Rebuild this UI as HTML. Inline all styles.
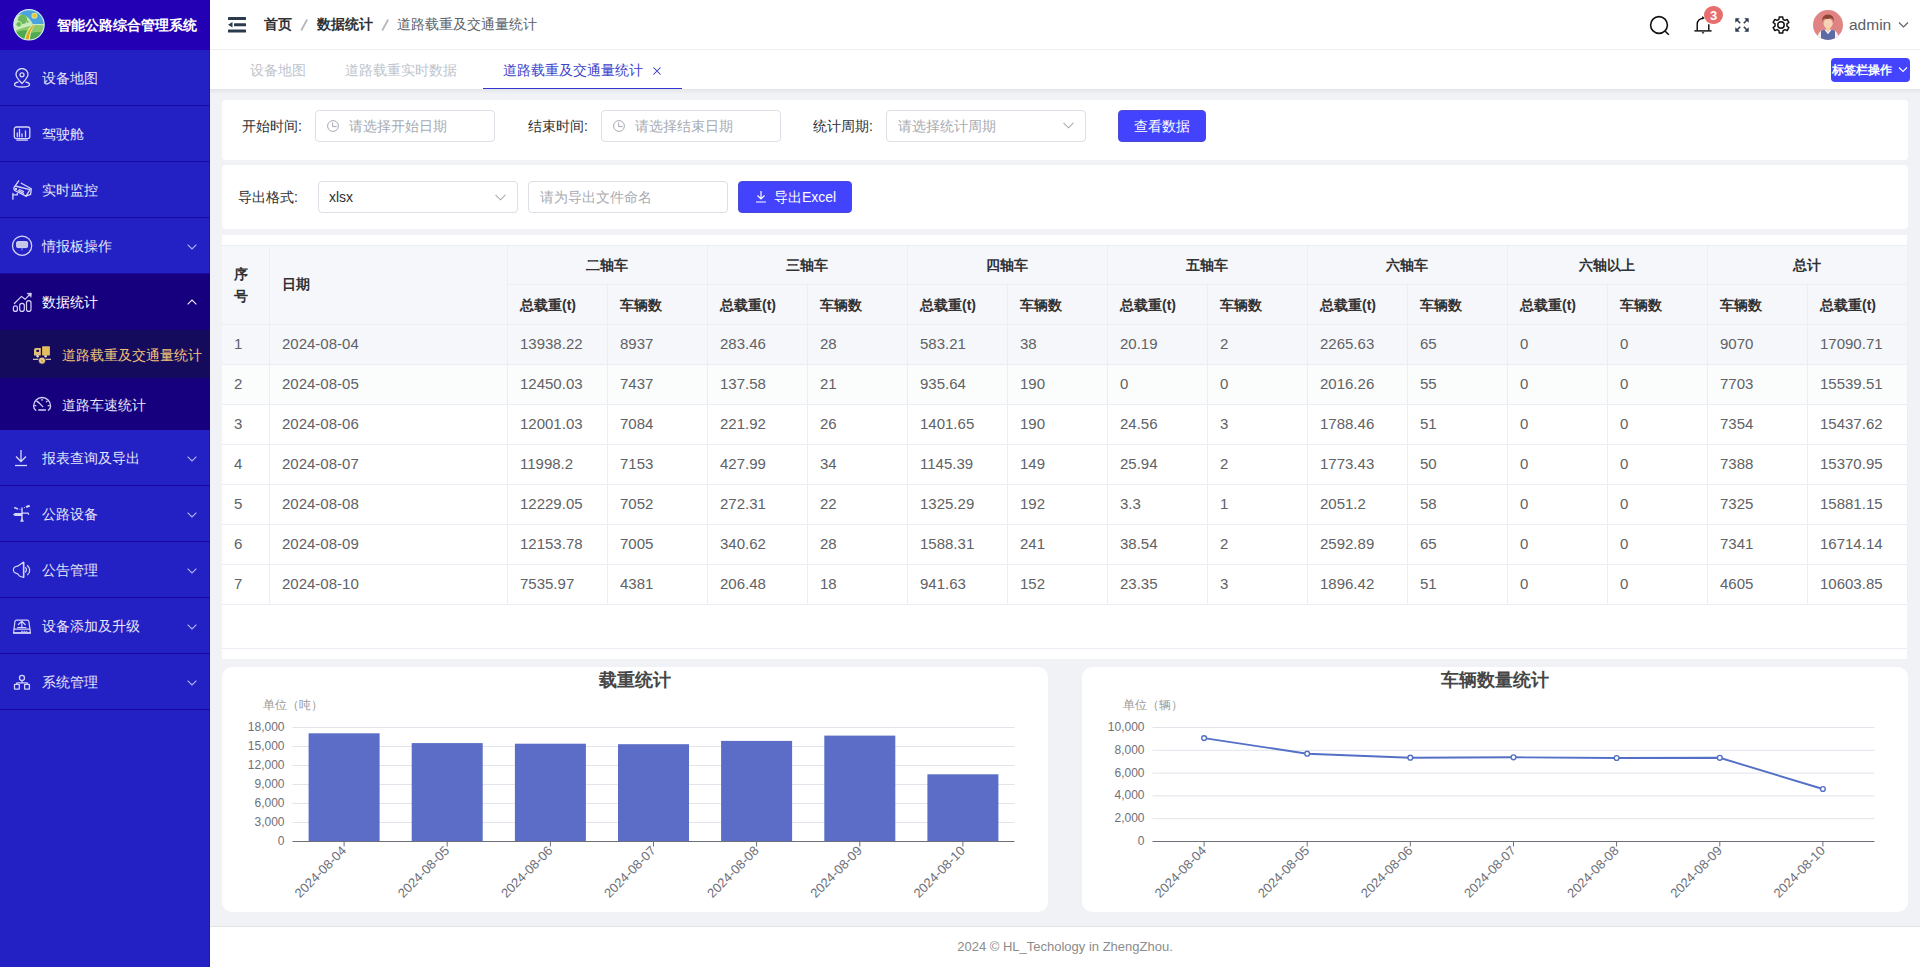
<!DOCTYPE html>
<html><head><meta charset="utf-8">
<style>
*{box-sizing:border-box;margin:0;padding:0}
html,body{width:1920px;height:967px;overflow:hidden;background:#f0f2f5;font-family:"Liberation Sans",sans-serif;font-size:14px;color:#606266}
.abs{position:absolute}
#side{position:absolute;left:0;top:0;width:210px;height:967px;background:#2320c4;box-shadow:inset -1px 0 0 #1c1aa6}
#logo{position:absolute;left:0;top:0;width:210px;height:50px;background:#2400b4}
.mi{position:absolute;left:0;width:210px;height:56px;border-bottom:1px solid #1c08a4;color:#e6e6fa;font-size:14px}
.mi .t{position:absolute;left:42px;top:1px;line-height:55px;white-space:nowrap}
.mi svg{position:absolute}
.ch{position:absolute;left:187px;width:6px;height:6px;border-right:1px solid #c8c8f0;border-bottom:1px solid #c8c8f0;transform:rotate(45deg)}
#nav{position:absolute;left:210px;top:0;width:1710px;height:50px;background:#fff;border-bottom:1px solid #efefef}
#tags{position:absolute;left:210px;top:50px;width:1710px;height:39px;background:#fff}
.card{position:absolute;background:#fff;border-radius:4px}
.lbl{position:absolute;color:#303133;font-size:14px;line-height:32px;white-space:nowrap}
.inp{position:absolute;height:32px;border:1px solid #dcdfe6;border-radius:4px;background:#fff;color:#a8abb2;line-height:30px;white-space:nowrap}
.btn{position:absolute;height:32px;border-radius:4px;background:#4343fe;border:1px solid #4a4ad6;color:#fff;line-height:30px;white-space:nowrap}
.hl{position:absolute;height:1px;background:#ebeef5}
.vl{position:absolute;width:1px;background:#ebeef5}
.th{position:absolute;color:#303133;font-weight:bold;font-size:14px;line-height:20px;white-space:nowrap}
.td{position:absolute;color:#606266;font-size:15px;line-height:20px;white-space:nowrap}

</style></head><body>
<div id="side">
 <div id="logo">
  <svg class="abs" style="left:13px;top:9px" width="32" height="32" viewBox="0 0 32 32">
   <defs><clipPath id="lc"><circle cx="16" cy="15.8" r="15.2"/></clipPath></defs>
   <g clip-path="url(#lc)">
    <rect x="0" y="0" width="32" height="32" fill="#4aa3dc"/>
    <circle cx="21.4" cy="6.8" r="3" fill="#d8ecb0"/><circle cx="21.4" cy="6.8" r="2.2" fill="#ecc42c"/>
    <path d="M0 8 Q6 4 12 6.5 Q17 9 20 15.5 L0 22Z" fill="#c8eab8"/>
    <circle cx="9.6" cy="10.4" r="4.6" fill="#6cb85c"/>
    <circle cx="5.8" cy="15.3" r="3" fill="#d0f0c0"/><circle cx="5.8" cy="15.3" r="2.4" fill="#6cb85c"/>
    <circle cx="14.8" cy="12.8" r="1" fill="#6cb85c"/>
    <path d="M0 21 Q10 16.5 20 15.2 Q27 14.6 32 15.3 L32 32 L0 32Z" fill="#d4f0c0"/>
    <path d="M0 22.2 Q10 17.8 20 16.3 Q27 15.8 32 16.4 L32 32 L0 32Z" fill="#8cc86c"/>
    <path d="M0 25 Q8 20 16 21.5 L14 32 L0 32Z" fill="#4ea84e"/>
    <path d="M18 24 Q26 22 32 24 L32 32 L17 32Z" fill="#52aa50"/>
    <path d="M10.8 32 Q12.6 22 19.3 15.6 L22.2 15.5 Q17 22.5 16.6 32Z" fill="#d8f0b8"/>
    <path d="M12 32 Q13.6 22.5 20 15.9 L21.3 15.9 Q16 22.5 15.6 32Z" fill="#e4a81e"/>
   </g>
   <circle cx="16" cy="15.8" r="15.2" fill="none" stroke="#d4ecf4" stroke-width="1.1"/>
  </svg>
  <div class="abs" style="left:57px;top:0;line-height:50px;color:#fff;font-weight:bold;font-size:14px;white-space:nowrap">智能公路综合管理系统</div>
 </div>
 <!-- 设备地图 50-105 -->
 <div class="mi" style="top:50px">
  <svg style="left:13px;top:18px" width="18" height="20" viewBox="0 0 18 20" fill="none" stroke="#d8d8f8" stroke-width="1.3">
   <path d="M9 15.5 C5 11.5 3 9 3 6.5 A6 6 0 0 1 15 6.5 C15 9 13 11.5 9 15.5Z"/><circle cx="9" cy="6.8" r="2"/>
   <path d="M5.5 14 C2.5 14.5 1.5 15.5 1.5 16.5 C1.5 18 5 19 9 19 C13 19 16.5 18 16.5 16.5 C16.5 15.5 15.5 14.5 12.5 14"/>
  </svg>
  <div class="t">设备地图</div>
 </div>
 <div class="mi" style="top:106px">
  <svg style="left:13px;top:19px" width="18" height="17" viewBox="0 0 18 17" fill="none" stroke="#d8d8f8" stroke-width="1.3" stroke-linecap="round">
   <rect x="1.3" y="2" width="15.5" height="11.6" rx="2"/><path d="M4 15.2 H14.3"/><path d="M4.3 11.8 V8 M6.5 11.8 V4.5 M9 11.8 V9 M12.5 11.8 V6"/>
  </svg>
  <div class="t">驾驶舱</div>
 </div>
 <div class="mi" style="top:162px">
  <svg style="left:8px;top:14px" width="28" height="28" viewBox="0 0 28 28" fill="none" stroke="#d8d8f8" stroke-width="1.3" stroke-linejoin="round" stroke-linecap="round">
   <path d="M10.7 4.9 L7.2 9.8"/><path d="M7.2 10 L22 13.7 L18 20.2 L6.6 14.5 Q5.4 13.5 6 11.5 Q6.5 10.2 7.2 10Z"/>
   <path d="M13.3 7.2 L23.3 12.8 L22.6 18.4 L18 20.2"/><circle cx="7.9" cy="12.9" r="0.6" fill="#d8d8f8"/>
   <path d="M10.2 14.6 L15.6 17.3 M11.5 13.5 L15.5 15.5"/>
   <path d="M4.9 17.4 V23.2 M4.9 18.9 H9.3 V17.4"/>
  </svg>
  <div class="t">实时监控</div>
 </div>
 <div class="mi" style="top:218px">
  <svg style="left:8px;top:13px" width="28" height="28" viewBox="0 0 28 28" fill="none" stroke="#d4d4fa" stroke-width="1.3">
   <circle cx="14.1" cy="14.7" r="9.6"/><rect x="8.6" y="10.6" width="11" height="6" rx="1.2" fill="#c4c8e4" stroke="#dcdcfa" stroke-width="0.9"/><path d="M14 17 V19.4" stroke-width="1.1" stroke="#8a8af0"/>
  </svg>
  <div class="t">情报板操作</div>
  <svg class="abs" style="left:187px;top:26px" width="10" height="6" viewBox="0 0 10 6" fill="none" stroke="#b4b4f4" stroke-width="1.1"><path d="M0.6 0.6 L5 5 L9.4 0.6"/></svg>
 </div>
 <div class="mi" style="top:274px;background:#17007e;border-bottom:none;height:56px;color:#fff">
  <svg style="left:8px;top:13px" width="28" height="28" viewBox="0 0 28 28" fill="none" stroke="#d4d4fa" stroke-width="1.2" stroke-linecap="round" stroke-linejoin="round">
   <path d="M6.4 16.5 L13.5 9.4 L17 12.3 L21.6 7.6"/><path d="M19.3 6.3 L23.4 6.1 L23.1 10Z" fill="#d4d4fa" stroke-width="0.6"/>
   <rect x="5.4" y="18.8" width="4" height="5.6" rx="2"/><rect x="11.7" y="16.4" width="4.6" height="8" rx="2.2"/><rect x="18.5" y="13.6" width="4.5" height="10.8" rx="2.2"/>
  </svg>
  <div class="t">数据统计</div>
  <svg class="abs" style="left:187px;top:25px" width="10" height="6" viewBox="0 0 10 6" fill="none" stroke="#f0f0ff" stroke-width="1.1"><path d="M0.6 5.4 L5 1 L9.4 5.4"/></svg>
 </div>
 <div class="abs" style="left:0;top:330px;width:210px;height:48px;background:#150b5c"></div>
 <div class="abs" style="left:0;top:378px;width:210px;height:52px;background:#17007e"></div>
 <svg class="abs" style="left:28px;top:340px" width="28" height="28" viewBox="0 0 28 28">
   <path d="M6 15.6 V10 Q6 8 8 8 H12.8 V15.6Z" fill="#e2c07a"/><rect x="8.4" y="9.9" width="2.6" height="2" fill="#17004e"/>
   <rect x="14.1" y="6.2" width="7.8" height="9.4" rx="0.6" fill="#e4be5c"/>
   <circle cx="9.6" cy="16.3" r="1.2" fill="#e8dcd0"/><circle cx="17.6" cy="16.3" r="1.2" fill="#e8dcd0"/>
   <path d="M5 19.3 H23" stroke="#ecdcc0" stroke-width="1.1"/>
   <circle cx="14" cy="20.6" r="3.6" fill="#e6c888" stroke="#150a5a" stroke-width="0.8"/><path d="M13 21.5 L14 19.6 L15 21.5Z" fill="#a88a30"/>
  </svg>
 <div class="abs" style="left:62px;top:331px;line-height:48px;color:#f3c07a;white-space:nowrap">道路载重及交通量统计</div>
 <svg class="abs" style="left:28px;top:390px" width="28" height="28" viewBox="0 0 28 28" fill="none" stroke="#d4d4fa" stroke-width="1.3" stroke-linecap="round">
   <path d="M7.8 20.3 Q5.6 19 5.6 16 A8.5 8.5 0 0 1 22.6 16 Q22.6 19 20.3 20.3"/>
   <path d="M14 9.5 V10.3 M8.9 11.2 L9.6 11.9 M19.1 11.2 L18.4 11.9 M6.8 15.7 H7.8 M21.2 15.7 H20.2"/>
   <path d="M9.6 11.5 L14.8 16.6"/><path d="M10.8 20 H17.4" stroke-width="1.5"/>
  </svg>
 <div class="abs" style="left:62px;top:380px;line-height:51px;color:#e6e6fa;white-space:nowrap">道路车速统计</div>
 <div class="mi" style="top:430px">
  <svg style="left:13px;top:19px" width="16" height="18" viewBox="0 0 16 18" fill="none" stroke="#d8d8f8" stroke-width="1.3">
   <path d="M8 1 V12 M3 7.5 L8 12.5 L13 7.5"/><path d="M2 16.5 H14"/>
  </svg>
  <div class="t">报表查询及导出</div>
  <svg class="abs" style="left:187px;top:26px" width="10" height="6" viewBox="0 0 10 6" fill="none" stroke="#b4b4f4" stroke-width="1.1"><path d="M0.6 0.6 L5 5 L9.4 0.6"/></svg>
 </div>
 <div class="mi" style="top:486px">
  <svg style="left:8px;top:14px" width="28" height="28" viewBox="0 0 28 28" fill="none" stroke="#d4d4fa" stroke-width="1.3">
   <path d="M14 7.5 V19" stroke-width="1.4"/><path d="M12.2 21.8 L13.3 18.4 H14.7 L15.8 21.8Z" fill="#d4d4fa" stroke="none"/>
   <path d="M5 14.5 L6.9 13 H14 V16 H6.9Z" fill="#d4d4fa" stroke="none"/><path d="M14 13.1 H20.1 L20.8 14.8" stroke-width="1.2"/>
   <path d="M6.2 7.6 L10 9.1" stroke-width="1.6"/><path d="M11.6 9.5 L12.3 9.3 M16 7.7 L16.7 7.4" stroke-width="1.2"/><path d="M18.1 7 L21.7 5.7" stroke-width="2"/>
  </svg>
  <div class="t">公路设备</div>
  <svg class="abs" style="left:187px;top:26px" width="10" height="6" viewBox="0 0 10 6" fill="none" stroke="#b4b4f4" stroke-width="1.1"><path d="M0.6 0.6 L5 5 L9.4 0.6"/></svg>
 </div>
 <div class="mi" style="top:542px">
  <svg style="left:8px;top:13px" width="28" height="28" viewBox="0 0 28 28" fill="none" stroke="#d4d4fa" stroke-width="1.2" stroke-linejoin="round">
   <path d="M15.6 7.1 L9.6 11.2 Q6.8 11.6 5.8 13 Q4.9 15 5.9 16.8 Q7 18.2 9.8 18.8 L11.4 21 L15.6 22.5Z"/><path d="M15.6 7.1 V22.5" stroke-width="1.5"/>
   <path d="M17.2 12.3 Q19.8 14.8 17.2 17.5"/><path d="M19.2 10.2 Q24.2 14.9 19.3 20.2"/>
  </svg>
  <div class="t">公告管理</div>
  <svg class="abs" style="left:187px;top:26px" width="10" height="6" viewBox="0 0 10 6" fill="none" stroke="#b4b4f4" stroke-width="1.1"><path d="M0.6 0.6 L5 5 L9.4 0.6"/></svg>
 </div>
 <div class="mi" style="top:598px">
  <svg style="left:8px;top:13px" width="28" height="28" viewBox="0 0 28 28" fill="none" stroke="#d4d4fa" stroke-width="1.2" stroke-linejoin="round" stroke-linecap="round">
   <path d="M5.6 21.8 L6.9 10.5 Q7.2 9.2 8.5 9.2 H19.3 Q20.6 9.2 20.9 10.5 L22.4 21.8Z"/><path d="M6.1 18.2 H21.8"/><path d="M5.6 22 H22.4" stroke-width="1.5"/>
   <path d="M13.8 10.6 V16.3 M10.4 13.5 L13.8 10.3 L17.3 13.7"/><path d="M9.7 16.5 H17.8"/><path d="M13.5 20.3 H19" stroke-dasharray="1.2 1.2" stroke-width="0.9"/>
  </svg>
  <div class="t">设备添加及升级</div>
  <svg class="abs" style="left:187px;top:26px" width="10" height="6" viewBox="0 0 10 6" fill="none" stroke="#b4b4f4" stroke-width="1.1"><path d="M0.6 0.6 L5 5 L9.4 0.6"/></svg>
 </div>
 <div class="mi" style="top:654px">
  <svg style="left:8px;top:13px" width="28" height="28" viewBox="0 0 28 28" fill="none" stroke="#d4d4fa" stroke-width="1.3">
   <circle cx="14" cy="10.9" r="2.5"/><path d="M14 13.4 V15.8 M8.6 17.2 V16.4 Q8.6 15.8 9.3 15.8 H18.7 Q19.4 15.8 19.4 16.4 V17.2"/>
   <rect x="6.5" y="17.4" width="4.8" height="4.8" rx="0.4"/><rect x="16.6" y="17.4" width="4.8" height="4.8" rx="0.4"/>
  </svg>
  <div class="t">系统管理</div>
  <svg class="abs" style="left:187px;top:26px" width="10" height="6" viewBox="0 0 10 6" fill="none" stroke="#b4b4f4" stroke-width="1.1"><path d="M0.6 0.6 L5 5 L9.4 0.6"/></svg>
 </div>
</div>

<div id="nav">
 <svg class="abs" style="left:18px;top:17px" width="18" height="16" viewBox="0 0 18 16" fill="#2c3a4e">
  <rect x="0" y="0" width="18" height="3" rx="0.5"/><rect x="6" y="6.3" width="12" height="3" rx="0.5"/><rect x="0" y="12.5" width="18" height="3" rx="0.5"/><path d="M0 7.8 L4.5 5 V10.6Z"/>
 </svg>
 <div class="abs" style="left:54px;top:14px;line-height:20px;color:#303133;font-weight:bold;white-space:nowrap">首页</div>
 <svg class="abs" style="left:88px;top:17px" width="12" height="16" viewBox="0 0 12 16"><path d="M9.2 2.5 L3.2 13.5" stroke="#b2b5bc" stroke-width="1.7" stroke-linecap="butt"/></svg>
 <div class="abs" style="left:107px;top:14px;line-height:20px;color:#303133;font-weight:bold;white-space:nowrap">数据统计</div>
 <svg class="abs" style="left:169px;top:17px" width="12" height="16" viewBox="0 0 12 16"><path d="M9.2 2.5 L3.2 13.5" stroke="#b2b5bc" stroke-width="1.7" stroke-linecap="butt"/></svg>
 <div class="abs" style="left:187px;top:14px;line-height:20px;color:#606266;white-space:nowrap">道路载重及交通量统计</div>
 <!-- search -->
 <svg class="abs" style="left:1438px;top:14px" width="24" height="24" viewBox="0 0 24 24" fill="none" stroke="#111" stroke-width="1.6">
  <circle cx="11" cy="11" r="8.4"/><path d="M17 17 L20.8 20.8"/>
 </svg>
 <!-- bell -->
 <svg class="abs" style="left:1482px;top:14px" width="22" height="22" viewBox="0 0 22 22" fill="none" stroke="#000" stroke-width="1.35">
  <path d="M5.2 16.6 V10.2 A5.8 5.8 0 0 1 11 4.3 M16.8 10.2 V16.6"/><path d="M2.4 16.9 H19.6"/><path d="M10.6 2.4 L12.2 4.3 L10.4 4.9Z" fill="#000" stroke-width="0.6"/><path d="M9.4 17.8 H12.6 L11 20.3Z" fill="#444" stroke="none"/>
 </svg>
 <div class="abs" style="left:1494px;top:6px;width:19px;height:18px;border-radius:9px;background:#e86d6d;color:#fff;font-size:13px;font-weight:bold;line-height:19px;text-align:center">3</div>
 <!-- fullscreen -->
 <svg class="abs" style="left:1525px;top:18px" width="14" height="14" viewBox="0 0 14 14" fill="#2c3a4e" stroke="#2c3a4e" stroke-width="1.5">
  <path d="M0.3 0.3 H4.8 L0.3 4.8Z" stroke="none"/><path d="M1.8 1.8 L5.2 5.2"/>
  <path d="M13.7 0.3 H9.2 L13.7 4.8Z" stroke="none"/><path d="M12.2 1.8 L8.8 5.2"/>
  <path d="M0.3 13.7 V9.2 L4.8 13.7Z" stroke="none"/><path d="M1.8 12.2 L5.2 8.8"/>
  <path d="M13.7 13.7 V9.2 L9.2 13.7Z" stroke="none"/><path d="M12.2 12.2 L8.8 8.8"/>
 </svg>
 <!-- gear -->
 <svg class="abs" style="left:1560px;top:14px" width="22" height="22" viewBox="0 0 24 24" fill="none" stroke="#111" stroke-width="1.6" stroke-linejoin="round">
  <path d="M10.13 3.20 L13.87 3.20 L14.26 5.80 L16.24 6.94 L18.69 5.98 L20.56 9.22 L18.50 10.85 L18.50 13.15 L20.56 14.78 L18.69 18.02 L16.24 17.06 L14.26 18.20 L13.87 20.80 L10.13 20.80 L9.74 18.20 L7.76 17.06 L5.31 18.02 L3.44 14.78 L5.50 13.15 L5.50 10.85 L3.44 9.22 L5.31 5.98 L7.76 6.94 L9.74 5.80Z"/>
  <circle cx="12" cy="12" r="3.5"/>
 </svg>
 <!-- avatar -->
 <svg class="abs" style="left:1603px;top:10px" width="30" height="30" viewBox="0 0 30 30">
  <defs><clipPath id="av"><circle cx="15" cy="15" r="15"/></clipPath></defs>
  <g clip-path="url(#av)">
   <rect width="30" height="30" fill="#e08383"/>
   <path d="M3.5 31 Q4.5 21.5 10 19.8 L20 19.8 Q25.5 21.5 26.5 31Z" fill="#f4f0f6"/>
   <path d="M8 31 V20.8 L11.2 19.6 L15 24.2 L18.8 19.6 L22 20.8 V31Z" fill="#5d6aa4"/>
   <path d="M12.8 16.5 H17.2 V19.8 L15 22.5 L12.8 19.8Z" fill="#f2cdb0"/>
   <ellipse cx="15.1" cy="13.6" rx="4.6" ry="4.8" fill="#f5d3b6"/>
   <path d="M9.3 11.6 Q8.8 4.4 15 4.4 Q21.2 4.4 20.8 11.6 Q20.3 8.6 17.8 8 Q15 9.5 11.5 8.6 Q9.8 9.4 9.3 11.6Z" fill="#8a4630"/>
  </g>
 </svg>
 <div class="abs" style="left:1639px;top:15px;line-height:20px;color:#5a5e66;font-size:15.5px;white-space:nowrap">admin</div>
 <svg class="abs" style="left:1688px;top:21px" width="11" height="8" viewBox="0 0 11 8" fill="none" stroke="#606266" stroke-width="1.2"><path d="M1 1.5 L5.5 6 L10 1.5"/></svg>
</div>
<div id="tags">
 <div class="abs" style="left:40px;top:10px;line-height:20px;color:#c0c4cc;white-space:nowrap">设备地图</div>
 <div class="abs" style="left:135px;top:10px;line-height:20px;color:#c0c4cc;white-space:nowrap">道路载重实时数据</div>
 <div class="abs" style="left:293px;top:10px;line-height:20px;color:#4242cc;white-space:nowrap">道路载重及交通量统计</div>
 <svg class="abs" style="left:442px;top:16px" width="10" height="10" viewBox="0 0 10 10" fill="none" stroke="#3434c4" stroke-width="1.05"><path d="M1.5 1.5 L8.5 8.5 M8.5 1.5 L1.5 8.5"/></svg>
 <div class="abs" style="left:273px;top:38px;width:199px;height:2px;background:#3434d0"></div>
 <div class="abs" style="left:1621px;top:8px;width:79px;height:24px;border-radius:4px;background:#4444fe"></div>
 <div class="abs" style="left:1622px;top:8px;line-height:24px;color:#fff;font-size:12px;font-weight:bold;white-space:nowrap">标签栏操作</div>
 <svg class="abs" style="left:1688px;top:16px" width="10" height="8" viewBox="0 0 10 8" fill="none" stroke="#fff" stroke-width="1.1"><path d="M1 1.5 L5 5.5 L9 1.5"/></svg>
</div>
<div class="abs" style="left:210px;top:89px;width:1710px;height:5px;background:linear-gradient(#e2e4e8,#f0f2f5)"></div>

<div class="card" style="left:222px;top:100px;width:1686px;height:60px"></div>
<div class="lbl" style="left:242px;top:110px">开始时间:</div>
<div class="inp" style="left:315px;top:110px;width:180px;padding-left:33px">请选择开始日期</div>
<svg class="abs" style="left:327px;top:120px" width="12" height="12" viewBox="0 0 12 12" fill="none" stroke="#a8abb2" stroke-width="1"><circle cx="6" cy="6" r="5.4"/><path d="M5.6 2.5 V6.6 H9.7"/></svg>
<div class="lbl" style="left:528px;top:110px">结束时间:</div>
<div class="inp" style="left:601px;top:110px;width:180px;padding-left:33px">请选择结束日期</div>
<svg class="abs" style="left:613px;top:120px" width="12" height="12" viewBox="0 0 12 12" fill="none" stroke="#a8abb2" stroke-width="1"><circle cx="6" cy="6" r="5.4"/><path d="M5.6 2.5 V6.6 H9.7"/></svg>
<div class="lbl" style="left:813px;top:110px">统计周期:</div>
<div class="inp" style="left:886px;top:110px;width:200px;padding-left:11px">请选择统计周期</div>
<svg class="abs" style="left:1062.5px;top:122.3px" width="11" height="7" viewBox="0 0 11 7" fill="none" stroke="#a8abb2" stroke-width="1.1"><path d="M0.5 0.8 L5.5 5.8 L10.5 0.8"/></svg>
<div class="btn" style="left:1118px;top:110px;width:88px;text-align:center">查看数据</div>

<div class="card" style="left:222px;top:165px;width:1686px;height:64px"></div>
<div class="lbl" style="left:238px;top:181px">导出格式:</div>
<div class="inp" style="left:318px;top:181px;width:200px;padding-left:10px;color:#303133;font-size:14px">xlsx</div>
<svg class="abs" style="left:494.5px;top:193.7px" width="11" height="7" viewBox="0 0 11 7" fill="none" stroke="#a8abb2" stroke-width="1.1"><path d="M0.5 0.8 L5.5 5.8 L10.5 0.8"/></svg>
<div class="inp" style="left:528px;top:181px;width:200px;padding-left:11px">请为导出文件命名</div>
<div class="btn" style="left:738px;top:181px;width:114px"></div>
<svg class="abs" style="left:755px;top:190px" width="12" height="13" viewBox="0 0 12 13" fill="none" stroke="#fff" stroke-width="1.2"><path d="M6 1 V9 M2.5 5.5 L6 9 L9.5 5.5 M1 12 H11"/></svg>
<div class="abs" style="left:774px;top:181px;line-height:32px;color:#fff;white-space:nowrap">导出Excel</div>

<div class="abs" style="left:222px;top:235px;width:1685px;height:424px;background:#fff"></div>
<div class="abs" style="left:222px;top:245px;width:1685px;height:79px;background:#f5f7fa"></div>
<div class="abs" style="left:222px;top:324px;width:1685px;height:40px;background:#f5f7fa"></div>
<div class="abs" style="left:222px;top:364px;width:1685px;height:40px;background:#fbfdfc"></div>
<div class="hl" style="left:222px;top:245px;width:1685px"></div>
<div class="hl" style="left:507px;top:284px;width:1400px"></div>
<div class="hl" style="left:222px;top:324px;width:1685px"></div>
<div class="hl" style="left:222px;top:364px;width:1685px"></div>
<div class="hl" style="left:222px;top:404px;width:1685px"></div>
<div class="hl" style="left:222px;top:444px;width:1685px"></div>
<div class="hl" style="left:222px;top:484px;width:1685px"></div>
<div class="hl" style="left:222px;top:524px;width:1685px"></div>
<div class="hl" style="left:222px;top:564px;width:1685px"></div>
<div class="hl" style="left:222px;top:604px;width:1685px"></div>
<div class="hl" style="left:222px;top:648px;width:1685px"></div>
<div class="vl" style="left:269px;top:245px;height:359px"></div>
<div class="vl" style="left:507px;top:245px;height:359px"></div>
<div class="vl" style="left:607px;top:285px;height:319px"></div>
<div class="vl" style="left:707px;top:245px;height:359px"></div>
<div class="vl" style="left:807px;top:285px;height:319px"></div>
<div class="vl" style="left:907px;top:245px;height:359px"></div>
<div class="vl" style="left:1007px;top:285px;height:319px"></div>
<div class="vl" style="left:1107px;top:245px;height:359px"></div>
<div class="vl" style="left:1207px;top:285px;height:319px"></div>
<div class="vl" style="left:1307px;top:245px;height:359px"></div>
<div class="vl" style="left:1407px;top:285px;height:319px"></div>
<div class="vl" style="left:1507px;top:245px;height:359px"></div>
<div class="vl" style="left:1607px;top:285px;height:319px"></div>
<div class="vl" style="left:1707px;top:245px;height:359px"></div>
<div class="vl" style="left:1807px;top:285px;height:319px"></div>
<div class="vl" style="left:1907px;top:245px;height:359px"></div>
<div class="th" style="left:234px;top:263px;width:20px;line-height:22px;white-space:normal">序<br>号</div>
<div class="th" style="left:282px;top:274px">日期</div>
<div class="th" style="left:507px;top:255px;width:200px;text-align:center">二轴车</div>
<div class="th" style="left:707px;top:255px;width:200px;text-align:center">三轴车</div>
<div class="th" style="left:907px;top:255px;width:200px;text-align:center">四轴车</div>
<div class="th" style="left:1107px;top:255px;width:200px;text-align:center">五轴车</div>
<div class="th" style="left:1307px;top:255px;width:200px;text-align:center">六轴车</div>
<div class="th" style="left:1507px;top:255px;width:200px;text-align:center">六轴以上</div>
<div class="th" style="left:1707px;top:255px;width:200px;text-align:center">总计</div>
<div class="th" style="left:520px;top:295px">总载重(t)</div>
<div class="th" style="left:620px;top:295px">车辆数</div>
<div class="th" style="left:720px;top:295px">总载重(t)</div>
<div class="th" style="left:820px;top:295px">车辆数</div>
<div class="th" style="left:920px;top:295px">总载重(t)</div>
<div class="th" style="left:1020px;top:295px">车辆数</div>
<div class="th" style="left:1120px;top:295px">总载重(t)</div>
<div class="th" style="left:1220px;top:295px">车辆数</div>
<div class="th" style="left:1320px;top:295px">总载重(t)</div>
<div class="th" style="left:1420px;top:295px">车辆数</div>
<div class="th" style="left:1520px;top:295px">总载重(t)</div>
<div class="th" style="left:1620px;top:295px">车辆数</div>
<div class="th" style="left:1720px;top:295px">车辆数</div>
<div class="th" style="left:1820px;top:295px">总载重(t)</div>
<div class="td" style="left:234px;top:334px">1</div>
<div class="td" style="left:282px;top:334px">2024-08-04</div>
<div class="td" style="left:520px;top:334px">13938.22</div>
<div class="td" style="left:620px;top:334px">8937</div>
<div class="td" style="left:720px;top:334px">283.46</div>
<div class="td" style="left:820px;top:334px">28</div>
<div class="td" style="left:920px;top:334px">583.21</div>
<div class="td" style="left:1020px;top:334px">38</div>
<div class="td" style="left:1120px;top:334px">20.19</div>
<div class="td" style="left:1220px;top:334px">2</div>
<div class="td" style="left:1320px;top:334px">2265.63</div>
<div class="td" style="left:1420px;top:334px">65</div>
<div class="td" style="left:1520px;top:334px">0</div>
<div class="td" style="left:1620px;top:334px">0</div>
<div class="td" style="left:1720px;top:334px">9070</div>
<div class="td" style="left:1820px;top:334px">17090.71</div>
<div class="td" style="left:234px;top:374px">2</div>
<div class="td" style="left:282px;top:374px">2024-08-05</div>
<div class="td" style="left:520px;top:374px">12450.03</div>
<div class="td" style="left:620px;top:374px">7437</div>
<div class="td" style="left:720px;top:374px">137.58</div>
<div class="td" style="left:820px;top:374px">21</div>
<div class="td" style="left:920px;top:374px">935.64</div>
<div class="td" style="left:1020px;top:374px">190</div>
<div class="td" style="left:1120px;top:374px">0</div>
<div class="td" style="left:1220px;top:374px">0</div>
<div class="td" style="left:1320px;top:374px">2016.26</div>
<div class="td" style="left:1420px;top:374px">55</div>
<div class="td" style="left:1520px;top:374px">0</div>
<div class="td" style="left:1620px;top:374px">0</div>
<div class="td" style="left:1720px;top:374px">7703</div>
<div class="td" style="left:1820px;top:374px">15539.51</div>
<div class="td" style="left:234px;top:414px">3</div>
<div class="td" style="left:282px;top:414px">2024-08-06</div>
<div class="td" style="left:520px;top:414px">12001.03</div>
<div class="td" style="left:620px;top:414px">7084</div>
<div class="td" style="left:720px;top:414px">221.92</div>
<div class="td" style="left:820px;top:414px">26</div>
<div class="td" style="left:920px;top:414px">1401.65</div>
<div class="td" style="left:1020px;top:414px">190</div>
<div class="td" style="left:1120px;top:414px">24.56</div>
<div class="td" style="left:1220px;top:414px">3</div>
<div class="td" style="left:1320px;top:414px">1788.46</div>
<div class="td" style="left:1420px;top:414px">51</div>
<div class="td" style="left:1520px;top:414px">0</div>
<div class="td" style="left:1620px;top:414px">0</div>
<div class="td" style="left:1720px;top:414px">7354</div>
<div class="td" style="left:1820px;top:414px">15437.62</div>
<div class="td" style="left:234px;top:454px">4</div>
<div class="td" style="left:282px;top:454px">2024-08-07</div>
<div class="td" style="left:520px;top:454px">11998.2</div>
<div class="td" style="left:620px;top:454px">7153</div>
<div class="td" style="left:720px;top:454px">427.99</div>
<div class="td" style="left:820px;top:454px">34</div>
<div class="td" style="left:920px;top:454px">1145.39</div>
<div class="td" style="left:1020px;top:454px">149</div>
<div class="td" style="left:1120px;top:454px">25.94</div>
<div class="td" style="left:1220px;top:454px">2</div>
<div class="td" style="left:1320px;top:454px">1773.43</div>
<div class="td" style="left:1420px;top:454px">50</div>
<div class="td" style="left:1520px;top:454px">0</div>
<div class="td" style="left:1620px;top:454px">0</div>
<div class="td" style="left:1720px;top:454px">7388</div>
<div class="td" style="left:1820px;top:454px">15370.95</div>
<div class="td" style="left:234px;top:494px">5</div>
<div class="td" style="left:282px;top:494px">2024-08-08</div>
<div class="td" style="left:520px;top:494px">12229.05</div>
<div class="td" style="left:620px;top:494px">7052</div>
<div class="td" style="left:720px;top:494px">272.31</div>
<div class="td" style="left:820px;top:494px">22</div>
<div class="td" style="left:920px;top:494px">1325.29</div>
<div class="td" style="left:1020px;top:494px">192</div>
<div class="td" style="left:1120px;top:494px">3.3</div>
<div class="td" style="left:1220px;top:494px">1</div>
<div class="td" style="left:1320px;top:494px">2051.2</div>
<div class="td" style="left:1420px;top:494px">58</div>
<div class="td" style="left:1520px;top:494px">0</div>
<div class="td" style="left:1620px;top:494px">0</div>
<div class="td" style="left:1720px;top:494px">7325</div>
<div class="td" style="left:1820px;top:494px">15881.15</div>
<div class="td" style="left:234px;top:534px">6</div>
<div class="td" style="left:282px;top:534px">2024-08-09</div>
<div class="td" style="left:520px;top:534px">12153.78</div>
<div class="td" style="left:620px;top:534px">7005</div>
<div class="td" style="left:720px;top:534px">340.62</div>
<div class="td" style="left:820px;top:534px">28</div>
<div class="td" style="left:920px;top:534px">1588.31</div>
<div class="td" style="left:1020px;top:534px">241</div>
<div class="td" style="left:1120px;top:534px">38.54</div>
<div class="td" style="left:1220px;top:534px">2</div>
<div class="td" style="left:1320px;top:534px">2592.89</div>
<div class="td" style="left:1420px;top:534px">65</div>
<div class="td" style="left:1520px;top:534px">0</div>
<div class="td" style="left:1620px;top:534px">0</div>
<div class="td" style="left:1720px;top:534px">7341</div>
<div class="td" style="left:1820px;top:534px">16714.14</div>
<div class="td" style="left:234px;top:574px">7</div>
<div class="td" style="left:282px;top:574px">2024-08-10</div>
<div class="td" style="left:520px;top:574px">7535.97</div>
<div class="td" style="left:620px;top:574px">4381</div>
<div class="td" style="left:720px;top:574px">206.48</div>
<div class="td" style="left:820px;top:574px">18</div>
<div class="td" style="left:920px;top:574px">941.63</div>
<div class="td" style="left:1020px;top:574px">152</div>
<div class="td" style="left:1120px;top:574px">23.35</div>
<div class="td" style="left:1220px;top:574px">3</div>
<div class="td" style="left:1320px;top:574px">1896.42</div>
<div class="td" style="left:1420px;top:574px">51</div>
<div class="td" style="left:1520px;top:574px">0</div>
<div class="td" style="left:1620px;top:574px">0</div>
<div class="td" style="left:1720px;top:574px">4605</div>
<div class="td" style="left:1820px;top:574px">10603.85</div>
<div class="card" style="left:222px;top:667px;width:826px;height:245px;border-radius:10px"></div>
<div class="card" style="left:1082px;top:667px;width:826px;height:245px;border-radius:10px"></div>
<svg class="abs" style="left:0;top:0" width="1920" height="967" viewBox="0 0 1920 967" font-family="Liberation Sans, sans-serif">
<text x="635" y="686" text-anchor="middle" font-size="18" font-weight="bold" fill="#464646">载重统计</text>
<text x="262.5" y="708.5" font-size="12" fill="#9a9a9a">单位（吨）</text>
<text x="284.5" y="845.0" text-anchor="end" font-size="12" fill="#6e7079">0</text>
<line x1="292.5" x2="1014.48" y1="822.5" y2="822.5" stroke="#e1e4ea" stroke-width="1"/>
<text x="284.5" y="826.0" text-anchor="end" font-size="12" fill="#6e7079">3,000</text>
<line x1="292.5" x2="1014.48" y1="803.5" y2="803.5" stroke="#e1e4ea" stroke-width="1"/>
<text x="284.5" y="807.0" text-anchor="end" font-size="12" fill="#6e7079">6,000</text>
<line x1="292.5" x2="1014.48" y1="784.5" y2="784.5" stroke="#e1e4ea" stroke-width="1"/>
<text x="284.5" y="788.0" text-anchor="end" font-size="12" fill="#6e7079">9,000</text>
<line x1="292.5" x2="1014.48" y1="765.5" y2="765.5" stroke="#e1e4ea" stroke-width="1"/>
<text x="284.5" y="769.0" text-anchor="end" font-size="12" fill="#6e7079">12,000</text>
<line x1="292.5" x2="1014.48" y1="746.5" y2="746.5" stroke="#e1e4ea" stroke-width="1"/>
<text x="284.5" y="750.0" text-anchor="end" font-size="12" fill="#6e7079">15,000</text>
<line x1="292.5" x2="1014.48" y1="727.5" y2="727.5" stroke="#e1e4ea" stroke-width="1"/>
<text x="284.5" y="731.0" text-anchor="end" font-size="12" fill="#6e7079">18,000</text>
<rect x="308.6" y="733.3" width="71" height="108.2" fill="#5b6dc7"/>
<rect x="411.7" y="743.1" width="71" height="98.4" fill="#5b6dc7"/>
<rect x="514.9" y="743.7" width="71" height="97.8" fill="#5b6dc7"/>
<rect x="618.0" y="744.2" width="71" height="97.3" fill="#5b6dc7"/>
<rect x="721.1" y="740.9" width="71" height="100.6" fill="#5b6dc7"/>
<rect x="824.3" y="735.6" width="71" height="105.9" fill="#5b6dc7"/>
<rect x="927.4" y="774.3" width="71" height="67.2" fill="#5b6dc7"/>
<line x1="292.5" x2="1014.48" y1="841.5" y2="841.5" stroke="#6e7079" stroke-width="1"/>
<line x1="344.1" x2="344.1" y1="841.5" y2="846.5" stroke="#6e7079" stroke-width="1"/>
<text transform="translate(347.1,851.5) rotate(-45)" text-anchor="end" font-size="13" fill="#6e7079">2024-08-04</text>
<line x1="447.2" x2="447.2" y1="841.5" y2="846.5" stroke="#6e7079" stroke-width="1"/>
<text transform="translate(450.2,851.5) rotate(-45)" text-anchor="end" font-size="13" fill="#6e7079">2024-08-05</text>
<line x1="550.4" x2="550.4" y1="841.5" y2="846.5" stroke="#6e7079" stroke-width="1"/>
<text transform="translate(553.4,851.5) rotate(-45)" text-anchor="end" font-size="13" fill="#6e7079">2024-08-06</text>
<line x1="653.5" x2="653.5" y1="841.5" y2="846.5" stroke="#6e7079" stroke-width="1"/>
<text transform="translate(656.5,851.5) rotate(-45)" text-anchor="end" font-size="13" fill="#6e7079">2024-08-07</text>
<line x1="756.6" x2="756.6" y1="841.5" y2="846.5" stroke="#6e7079" stroke-width="1"/>
<text transform="translate(759.6,851.5) rotate(-45)" text-anchor="end" font-size="13" fill="#6e7079">2024-08-08</text>
<line x1="859.8" x2="859.8" y1="841.5" y2="846.5" stroke="#6e7079" stroke-width="1"/>
<text transform="translate(862.8,851.5) rotate(-45)" text-anchor="end" font-size="13" fill="#6e7079">2024-08-09</text>
<line x1="962.9" x2="962.9" y1="841.5" y2="846.5" stroke="#6e7079" stroke-width="1"/>
<text transform="translate(965.9,851.5) rotate(-45)" text-anchor="end" font-size="13" fill="#6e7079">2024-08-10</text>
<text x="1495" y="686" text-anchor="middle" font-size="18" font-weight="bold" fill="#464646">车辆数量统计</text>
<text x="1122.5" y="708.5" font-size="12" fill="#9a9a9a">单位（辆）</text>
<text x="1144.5" y="845.0" text-anchor="end" font-size="12" fill="#6e7079">0</text>
<line x1="1152.5" x2="1874.48" y1="818.7" y2="818.7" stroke="#e1e4ea" stroke-width="1"/>
<text x="1144.5" y="822.2" text-anchor="end" font-size="12" fill="#6e7079">2,000</text>
<line x1="1152.5" x2="1874.48" y1="795.9" y2="795.9" stroke="#e1e4ea" stroke-width="1"/>
<text x="1144.5" y="799.4" text-anchor="end" font-size="12" fill="#6e7079">4,000</text>
<line x1="1152.5" x2="1874.48" y1="773.1" y2="773.1" stroke="#e1e4ea" stroke-width="1"/>
<text x="1144.5" y="776.6" text-anchor="end" font-size="12" fill="#6e7079">6,000</text>
<line x1="1152.5" x2="1874.48" y1="750.3" y2="750.3" stroke="#e1e4ea" stroke-width="1"/>
<text x="1144.5" y="753.8" text-anchor="end" font-size="12" fill="#6e7079">8,000</text>
<line x1="1152.5" x2="1874.48" y1="727.5" y2="727.5" stroke="#e1e4ea" stroke-width="1"/>
<text x="1144.5" y="731.0" text-anchor="end" font-size="12" fill="#6e7079">10,000</text>
<line x1="1152.5" x2="1874.48" y1="841.5" y2="841.5" stroke="#6e7079" stroke-width="1"/>
<line x1="1204.1" x2="1204.1" y1="841.5" y2="846.5" stroke="#6e7079" stroke-width="1"/>
<text transform="translate(1207.1,851.5) rotate(-45)" text-anchor="end" font-size="13" fill="#6e7079">2024-08-04</text>
<line x1="1307.2" x2="1307.2" y1="841.5" y2="846.5" stroke="#6e7079" stroke-width="1"/>
<text transform="translate(1310.2,851.5) rotate(-45)" text-anchor="end" font-size="13" fill="#6e7079">2024-08-05</text>
<line x1="1410.3" x2="1410.3" y1="841.5" y2="846.5" stroke="#6e7079" stroke-width="1"/>
<text transform="translate(1413.3,851.5) rotate(-45)" text-anchor="end" font-size="13" fill="#6e7079">2024-08-06</text>
<line x1="1513.5" x2="1513.5" y1="841.5" y2="846.5" stroke="#6e7079" stroke-width="1"/>
<text transform="translate(1516.5,851.5) rotate(-45)" text-anchor="end" font-size="13" fill="#6e7079">2024-08-07</text>
<line x1="1616.6" x2="1616.6" y1="841.5" y2="846.5" stroke="#6e7079" stroke-width="1"/>
<text transform="translate(1619.6,851.5) rotate(-45)" text-anchor="end" font-size="13" fill="#6e7079">2024-08-08</text>
<line x1="1719.8" x2="1719.8" y1="841.5" y2="846.5" stroke="#6e7079" stroke-width="1"/>
<text transform="translate(1722.8,851.5) rotate(-45)" text-anchor="end" font-size="13" fill="#6e7079">2024-08-09</text>
<line x1="1822.9" x2="1822.9" y1="841.5" y2="846.5" stroke="#6e7079" stroke-width="1"/>
<text transform="translate(1825.9,851.5) rotate(-45)" text-anchor="end" font-size="13" fill="#6e7079">2024-08-10</text>
<polyline fill="none" stroke="#5470c6" stroke-width="1.9" points="1204.1,738.1 1307.2,753.7 1410.3,757.7 1513.5,757.3 1616.6,758.0 1719.8,757.8 1822.9,789.0"/>
<circle cx="1204.1" cy="738.1" r="2.4" fill="#fff" stroke="#5470c6" stroke-width="1.4"/>
<circle cx="1307.2" cy="753.7" r="2.4" fill="#fff" stroke="#5470c6" stroke-width="1.4"/>
<circle cx="1410.3" cy="757.7" r="2.4" fill="#fff" stroke="#5470c6" stroke-width="1.4"/>
<circle cx="1513.5" cy="757.3" r="2.4" fill="#fff" stroke="#5470c6" stroke-width="1.4"/>
<circle cx="1616.6" cy="758.0" r="2.4" fill="#fff" stroke="#5470c6" stroke-width="1.4"/>
<circle cx="1719.8" cy="757.8" r="2.4" fill="#fff" stroke="#5470c6" stroke-width="1.4"/>
<circle cx="1822.9" cy="789.0" r="2.4" fill="#fff" stroke="#5470c6" stroke-width="1.4"/>
</svg>
<div class="abs" style="left:210px;top:926px;width:1710px;height:41px;background:#fff;border-top:1px solid #e4e4e4"></div>
<div class="abs" style="left:210px;top:938px;width:1710px;text-align:center;font-size:13px;line-height:18px;color:#8c8c8c">2024 © HL_Techology in ZhengZhou.</div>
</body></html>
